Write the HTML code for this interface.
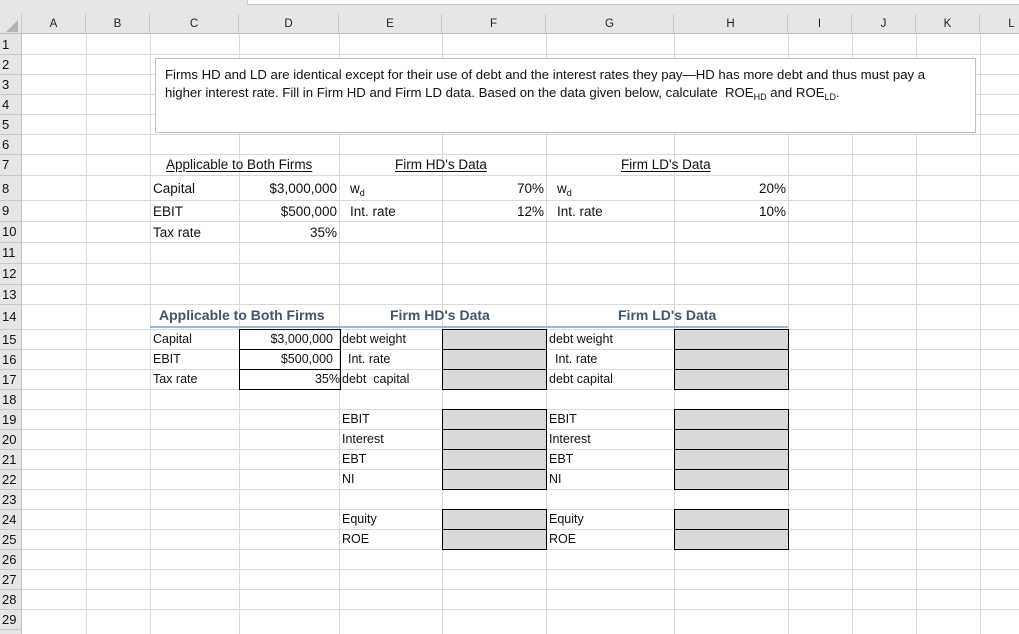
<!DOCTYPE html>
<html><head><meta charset="utf-8"><style>
body{margin:0;width:1019px;height:624px;overflow:hidden;background:#fff;font-family:"Liberation Sans",sans-serif;position:relative}
div{position:absolute;box-sizing:border-box}
.v{top:34px;height:600px;width:1px;background:#d9d9d9}
.h{left:22px;width:1000px;height:1px;background:#d9d9d9}
.ch{top:14px;height:20px;line-height:21px;text-align:center;font-size:11.5px;color:#222;border-right:1px solid #c8c8c8}
.rh{left:0;width:22px;font-size:13px;color:#111;text-align:left;padding-left:2px;border-bottom:1px solid #c8c8c8}
.t{font-size:13.5px;color:#111;white-space:nowrap}
.s{font-size:12.5px;color:#111;white-space:nowrap}
.r{text-align:right}
.g{background:#d9d9d9;border:1px solid #000}
.u{text-decoration:underline;text-underline-offset:2px}
.b{font-weight:bold;color:#44546a;font-size:14px}
sub{font-size:9px;vertical-align:-3px}
</style></head><body>
<div style="left:0;top:0;width:1019px;height:34px;background:#e6e6e6"></div>
<div style="left:247px;top:-1px;width:780px;height:6px;background:#fff;border:1px solid #c8c8c8"></div>
<div style="left:0;top:34px;width:22px;height:600px;background:#e6e6e6;border-right:1px solid #bdbdbd"></div>
<div style="left:0;top:14px;width:22px;height:20px;border-right:1px solid #c8c8c8"></div>
<div style="left:6px;top:20px;width:0;height:0;border-left:12px solid transparent;border-bottom:12px solid #b4b4b4"></div>
<div style="left:0;top:33px;width:1019px;height:1px;background:#bdbdbd"></div>
<div class="ch" style="left:22px;width:64px">A</div>
<div class="ch" style="left:86px;width:64px">B</div>
<div class="ch" style="left:150px;width:89px">C</div>
<div class="ch" style="left:239px;width:100px">D</div>
<div class="ch" style="left:339px;width:103px">E</div>
<div class="ch" style="left:442px;width:104px">F</div>
<div class="ch" style="left:546px;width:128px">G</div>
<div class="ch" style="left:674px;width:114px">H</div>
<div class="ch" style="left:788px;width:64px">I</div>
<div class="ch" style="left:852px;width:64px">J</div>
<div class="ch" style="left:916px;width:64px">K</div>
<div class="ch" style="left:980px;width:64px">L</div>
<div class="v" style="left:86px"></div><div class="v" style="left:150px"></div><div class="v" style="left:239px"></div><div class="v" style="left:339px"></div><div class="v" style="left:442px"></div><div class="v" style="left:546px"></div><div class="v" style="left:674px"></div><div class="v" style="left:788px"></div><div class="v" style="left:852px"></div><div class="v" style="left:916px"></div><div class="v" style="left:980px"></div>
<div class="h" style="top:54px"></div><div class="h" style="top:74px"></div><div class="h" style="top:94px"></div><div class="h" style="top:114px"></div><div class="h" style="top:134px"></div><div class="h" style="top:154px"></div><div class="h" style="top:175px"></div><div class="h" style="top:200px"></div><div class="h" style="top:221px"></div><div class="h" style="top:242px"></div><div class="h" style="top:263px"></div><div class="h" style="top:284px"></div><div class="h" style="top:304px"></div><div class="h" style="top:329px"></div><div class="h" style="top:349px"></div><div class="h" style="top:369px"></div><div class="h" style="top:389px"></div><div class="h" style="top:409px"></div><div class="h" style="top:429px"></div><div class="h" style="top:449px"></div><div class="h" style="top:469px"></div><div class="h" style="top:489px"></div><div class="h" style="top:509px"></div><div class="h" style="top:529px"></div><div class="h" style="top:549px"></div><div class="h" style="top:569px"></div><div class="h" style="top:589px"></div><div class="h" style="top:609px"></div>
<div class="rh" style="top:34px;height:21px;line-height:21px">1</div>
<div class="rh" style="top:54px;height:21px;line-height:21px">2</div>
<div class="rh" style="top:74px;height:21px;line-height:21px">3</div>
<div class="rh" style="top:94px;height:21px;line-height:21px">4</div>
<div class="rh" style="top:114px;height:21px;line-height:21px">5</div>
<div class="rh" style="top:134px;height:21px;line-height:21px">6</div>
<div class="rh" style="top:154px;height:22px;line-height:22px">7</div>
<div class="rh" style="top:175px;height:26px;line-height:28px">8</div>
<div class="rh" style="top:200px;height:22px;line-height:22px">9</div>
<div class="rh" style="top:221px;height:22px;line-height:22px">10</div>
<div class="rh" style="top:242px;height:22px;line-height:22px">11</div>
<div class="rh" style="top:263px;height:22px;line-height:22px">12</div>
<div class="rh" style="top:284px;height:21px;line-height:21px">13</div>
<div class="rh" style="top:304px;height:26px;line-height:26px">14</div>
<div class="rh" style="top:329px;height:21px;line-height:21px">15</div>
<div class="rh" style="top:349px;height:21px;line-height:21px">16</div>
<div class="rh" style="top:369px;height:21px;line-height:21px">17</div>
<div class="rh" style="top:389px;height:21px;line-height:21px">18</div>
<div class="rh" style="top:409px;height:21px;line-height:21px">19</div>
<div class="rh" style="top:429px;height:21px;line-height:21px">20</div>
<div class="rh" style="top:449px;height:21px;line-height:21px">21</div>
<div class="rh" style="top:469px;height:21px;line-height:21px">22</div>
<div class="rh" style="top:489px;height:21px;line-height:21px">23</div>
<div class="rh" style="top:509px;height:21px;line-height:21px">24</div>
<div class="rh" style="top:529px;height:21px;line-height:21px">25</div>
<div class="rh" style="top:549px;height:21px;line-height:21px">26</div>
<div class="rh" style="top:569px;height:21px;line-height:21px">27</div>
<div class="rh" style="top:589px;height:21px;line-height:21px">28</div>
<div class="rh" style="top:609px;height:21px;line-height:21px">29</div>
<div style="left:155px;top:58px;width:821px;height:75px;background:#fff;border:1px solid #bfbfbf;padding:7px 0 0 9px;font-size:13.2px;line-height:18px;color:#111">Firms HD and LD are identical except for their use of debt and the interest rates they pay—HD has more debt and thus must pay a<br>higher interest rate. Fill in Firm HD and Firm LD data. Based on the data given below, calculate&nbsp; ROE<sub>HD</sub> and ROE<sub>LD</sub>.</div>
<div class="t u" style="left:166px;top:157px">Applicable to Both Firms</div>
<div class="t u" style="left:395px;top:157px">Firm HD's Data</div>
<div class="t u" style="left:621px;top:157px">Firm LD's Data</div>
<div class="t" style="left:153px;top:181px">Capital</div>
<div class="t r" style="left:239px;width:98px;top:181px">$3,000,000</div>
<div class="t" style="left:350px;top:181px">w<sub>d</sub></div>
<div class="t r" style="left:442px;width:102px;top:181px">70%</div>
<div class="t" style="left:557px;top:181px">w<sub>d</sub></div>
<div class="t r" style="left:674px;width:112px;top:181px">20%</div>
<div class="t" style="left:153px;top:204px">EBIT</div>
<div class="t r" style="left:239px;width:98px;top:204px">$500,000</div>
<div class="t" style="left:350px;top:204px">Int. rate</div>
<div class="t r" style="left:442px;width:102px;top:204px">12%</div>
<div class="t" style="left:557px;top:204px">Int. rate</div>
<div class="t r" style="left:674px;width:112px;top:204px">10%</div>
<div class="t" style="left:153px;top:225px">Tax rate</div>
<div class="t r" style="left:239px;width:98px;top:225px">35%</div>
<div class="b" style="left:159px;top:307px">Applicable to Both Firms</div>
<div class="b" style="left:390px;top:307px">Firm HD's Data</div>
<div class="b" style="left:618px;top:307px">Firm LD's Data</div>
<div style="left:150px;top:326px;width:638px;height:2px;background:#9fb6dd"></div>
<div style="left:239px;top:329px;width:102px;height:21px;border:1px solid #000"></div>
<div style="left:239px;top:349px;width:102px;height:21px;border:1px solid #000"></div>
<div style="left:239px;top:369px;width:102px;height:21px;border:1px solid #000"></div>
<div class="s" style="left:153px;top:332px">Capital</div>
<div class="s" style="left:153px;top:352px">EBIT</div>
<div class="s" style="left:153px;top:372px">Tax rate</div>
<div class="s r" style="left:239px;width:94px;top:332px">$3,000,000</div>
<div class="s r" style="left:239px;width:94px;top:352px">$500,000</div>
<div class="s r" style="left:239px;width:101px;top:372px">35%</div>
<div class="s" style="left:342px;top:332px">debt weight</div>
<div class="s" style="left:348px;top:352px">Int. rate</div>
<div class="s" style="left:342px;top:372px">debt&nbsp; capital</div>
<div class="s" style="left:549px;top:332px">debt weight</div>
<div class="s" style="left:555px;top:352px">Int. rate</div>
<div class="s" style="left:549px;top:372px">debt capital</div>
<div class="s" style="left:342px;top:412px">EBIT</div><div class="s" style="left:549px;top:412px">EBIT</div>
<div class="s" style="left:342px;top:432px">Interest</div><div class="s" style="left:549px;top:432px">Interest</div>
<div class="s" style="left:342px;top:452px">EBT</div><div class="s" style="left:549px;top:452px">EBT</div>
<div class="s" style="left:342px;top:472px">NI</div><div class="s" style="left:549px;top:472px">NI</div>
<div class="s" style="left:342px;top:512px">Equity</div><div class="s" style="left:549px;top:512px">Equity</div>
<div class="s" style="left:342px;top:532px">ROE</div><div class="s" style="left:549px;top:532px">ROE</div>
<div class="g" style="left:442px;top:329px;width:105px;height:21px"></div>
<div class="g" style="left:442px;top:349px;width:105px;height:21px"></div>
<div class="g" style="left:442px;top:369px;width:105px;height:21px"></div>
<div class="g" style="left:442px;top:409px;width:105px;height:21px"></div>
<div class="g" style="left:442px;top:429px;width:105px;height:21px"></div>
<div class="g" style="left:442px;top:449px;width:105px;height:21px"></div>
<div class="g" style="left:442px;top:469px;width:105px;height:21px"></div>
<div class="g" style="left:442px;top:509px;width:105px;height:21px"></div>
<div class="g" style="left:442px;top:529px;width:105px;height:21px"></div>
<div class="g" style="left:674px;top:329px;width:115px;height:21px"></div>
<div class="g" style="left:674px;top:349px;width:115px;height:21px"></div>
<div class="g" style="left:674px;top:369px;width:115px;height:21px"></div>
<div class="g" style="left:674px;top:409px;width:115px;height:21px"></div>
<div class="g" style="left:674px;top:429px;width:115px;height:21px"></div>
<div class="g" style="left:674px;top:449px;width:115px;height:21px"></div>
<div class="g" style="left:674px;top:469px;width:115px;height:21px"></div>
<div class="g" style="left:674px;top:509px;width:115px;height:21px"></div>
<div class="g" style="left:674px;top:529px;width:115px;height:21px"></div>
</body></html>
